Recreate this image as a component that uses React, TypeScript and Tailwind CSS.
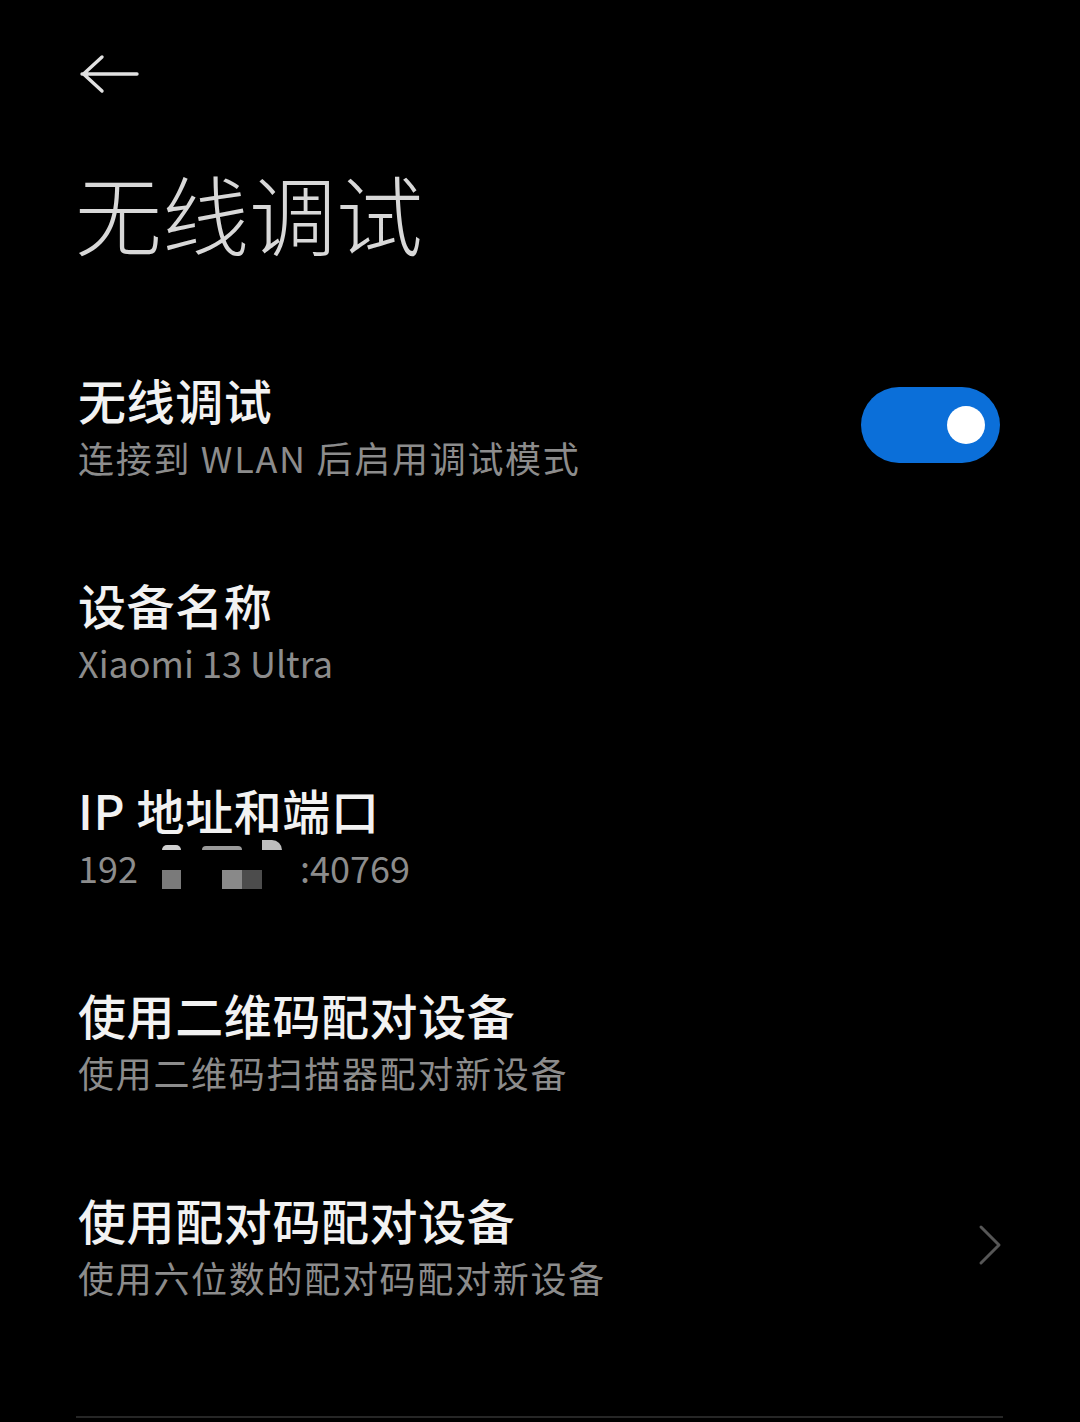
import React from 'react';

const FONT = { fontFamily: '"Noto Sans CJK SC", "Noto Sans", sans-serif' };

type Item = {
  title: string;
  sub: React.ReactNode;
  right?: React.ReactNode;
};

const Toggle: React.FC = () => (
  <div className="w-[139px] h-[76px] rounded-full bg-[#0b6fd9] flex items-center justify-end pr-[15px] shrink-0">
    <div className="w-[38px] h-[38px] rounded-full bg-white" />
  </div>
);

const Chevron: React.FC = () => (
  <svg width="24" height="42" viewBox="0 0 24 42" className="shrink-0 mr-[-2px]">
    <path d="M3 3 L21 21 L3 39" fill="none" stroke="#565656" strokeWidth="3" strokeLinecap="round" strokeLinejoin="round" />
  </svg>
);

// blurred / redacted part of the IP address
const Redacted: React.FC = () => (
  <span className="flex flex-col w-[162px] -mt-[9px] -mb-[4px]">
    <span className="flex items-end h-[10px]">
      <span className="ml-[24px] w-[19px] h-[5px] rounded-t-full bg-[#cfcfcf]" />
      <span className="ml-[21px] w-[40px] h-[4px] rounded-t-[6px] bg-[#9a9a9a]" />
      <span className="ml-[20px] w-[20px] h-[10px] rounded-tr-full bg-[#bdbdbd]" />
    </span>
    <span className="flex mt-[20px] h-[19px]">
      <span className="ml-[24px] w-[19px] bg-[#7a7a7a]" />
      <span className="ml-[41px] w-[20px] bg-[#898989]" />
      <span className="w-[20px] bg-[#4c4c4c]" />
    </span>
  </span>
);

const items: Item[] = [
  { title: '无线调试', sub: '连接到 WLAN 后启用调试模式', right: <Toggle /> },
  { title: '设备名称', sub: <span className="tracking-normal">Xiaomi 13 Ultra</span> },
  {
    title: 'IP 地址和端口',
    sub: (
      <span className="flex items-start tracking-normal">
        <span>192</span>
        <Redacted />
        <span>:40769</span>
      </span>
    ),
  },
  { title: '使用二维码配对设备', sub: '使用二维码扫描器配对新设备' },
  { title: '使用配对码配对设备', sub: '使用六位数的配对码配对新设备', right: <Chevron /> },
];

export default function App() {
  return (
    <div className="w-[1080px] h-[1422px] bg-black overflow-hidden pl-[78px] pr-[80px]" style={FONT}>
      {/* back arrow */}
      <div className="pt-[54px] ml-[2px]">
        <svg width="60" height="40" viewBox="0 0 60 40">
          <path d="M2 20 H57 M22 3 L3.5 20 L22 37" fill="none" stroke="#e2e2e2" strokeWidth="3.4" strokeLinecap="round" strokeLinejoin="round" />
        </svg>
      </div>

      <h1 className="mt-[75px] text-[87px] leading-none font-light text-[#d8d8d8] ml-[-3px]">无线调试</h1>

      <div className="mt-[119px] flex flex-col gap-[105px]">
        {items.map((it) => (
          <div key={it.title} className="flex items-center justify-between">
            <div className="flex flex-col gap-[16px]">
              <div className="text-[48px] leading-[48px] font-medium tracking-[0.6px] text-[#f2f2f2]">{it.title}</div>
              <div className="text-[36px] leading-[36px] tracking-[1.7px] text-[#8c8c8c] whitespace-nowrap">{it.sub}</div>
            </div>
            {it.right}
          </div>
        ))}
      </div>

      <div className="mt-[121px] ml-[-2px] mr-[-3px] h-[2px] bg-[#262626]" />
    </div>
  );
}
